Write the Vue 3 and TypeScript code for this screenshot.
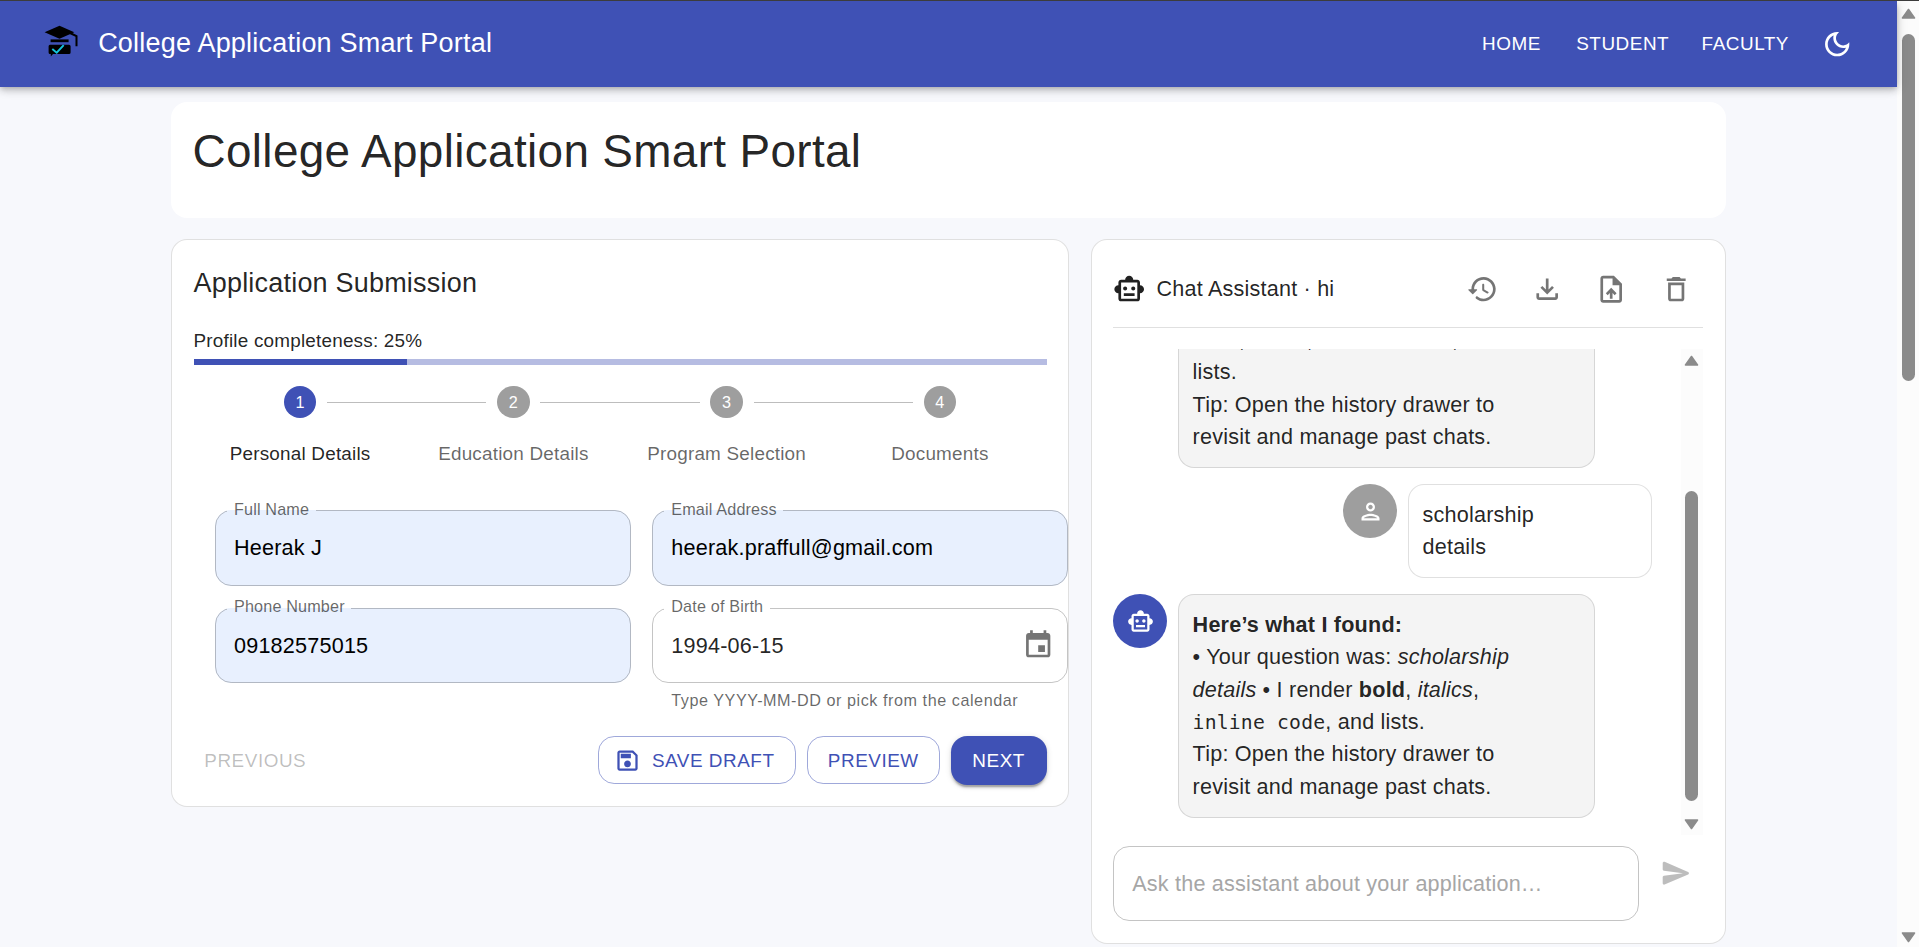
<script setup lang="ts">
import { ref } from 'vue'

interface Field {
  id: string
  label: string
  type: string
  autofilled: boolean
  helper?: string
}

const steps: string[] = ['Personal Details', 'Education Details', 'Program Selection', 'Documents']
const activeStep = ref<number>(0)
const completeness = ref<number>(25)

const fields: Field[] = [
  { id: 'name', label: 'Full Name', type: 'text', autofilled: true },
  { id: 'email', label: 'Email Address', type: 'text', autofilled: true },
  { id: 'phone', label: 'Phone Number', type: 'text', autofilled: true },
  { id: 'dob', label: 'Date of Birth', type: 'text', autofilled: false, helper: 'Type YYYY-MM-DD or pick from the calendar' },
]

const values = ref<Record<string, string>>({
  name: 'Heerak J',
  email: 'heerak.praffull@gmail.com',
  phone: '09182575015',
  dob: '1994-06-15',
})

const draft = ref<string>('')
const nav: string[] = ['Home', 'Student', 'Faculty']

const robot =
  'M20 9V7c0-1.1-.9-2-2-2h-3c0-1.66-1.34-3-3-3S9 3.34 9 5H6c-1.1 0-2 .9-2 2v2c-1.66 0-3 1.34-3 3s1.34 3 3 3v4c0 1.1.9 2 2 2h12c1.1 0 2-.9 2-2v-4c1.66 0 3-1.34 3-3s-1.34-3-3-3zm-2 10H6V7h12v12zm-9-6c-.83 0-1.5-.67-1.5-1.5S8.17 10 9 10s1.5.67 1.5 1.5S9.83 13 9 13zm7.5-1.5c0 .83-.67 1.5-1.5 1.5s-1.5-.67-1.5-1.5.67-1.5 1.5-1.5 1.5.67 1.5 1.5zM8 15h8v2H8v-2z'

const tools: { name: string; path: string }[] = [
  {
    name: 'History',
    path: 'M13.26 3C8.17 2.86 4 6.95 4 12H2.21c-.45 0-.67.54-.35.85l2.79 2.8c.2.2.51.2.71 0l2.79-2.8c.31-.31.09-.85-.36-.85H6c0-3.9 3.18-7.05 7.1-7 3.72.05 6.85 3.18 6.9 6.9.05 3.91-3.1 7.1-7 7.1-1.61 0-3.1-.55-4.28-1.48-.4-.31-.96-.28-1.32.08-.42.42-.39 1.13.08 1.49C9 20.29 10.91 21 13 21c5.05 0 9.14-4.17 9-9.26-.13-4.69-4.05-8.61-8.74-8.74zm-.51 5c-.41 0-.75.34-.75.75v3.68c0 .35.19.68.49.86l3.12 1.85c.36.21.82.09 1.03-.26.21-.36.09-.82-.26-1.03l-2.88-1.71v-3.4c0-.4-.34-.74-.75-.74z',
  },
  {
    name: 'Download',
    path: 'M18 15v3H6v-3H4v3c0 1.1.9 2 2 2h12c1.1 0 2-.9 2-2v-3h-2zm-1-4-1.41-1.41L13 12.17V4h-2v8.17L8.41 9.59 7 11l5 5 5-5z',
  },
  {
    name: 'Upload',
    path: 'M14 2H6c-1.1 0-1.99.9-1.99 2L4 20c0 1.1.89 2 1.99 2H18c1.1 0 2-.9 2-2V8l-6-6zm4 18H6V4h7v5h5v11zM8 15.01l1.41 1.41L11 14.84V19h2v-4.16l1.59 1.59L16 15.01 12.01 11 8 15.01z',
  },
  {
    name: 'Clear',
    path: 'M6 19c0 1.1.9 2 2 2h8c1.1 0 2-.9 2-2V7H6v12zM8 9h8v10H8V9zm7.5-5-1-1h-5l-1 1H5v2h14V4h-3.5z',
  },
]
</script>

<template>
  <div class="window">
    <div class="page">
      <header class="appbar">
        <svg class="logo" viewBox="0 0 54 54">
          <path d="M12.600 15.300 27.500 8.800 42.300 15.300 27.500 21.800z" fill="#000" />
          <path d="M38 16l6.500 3.200v10" fill="none" stroke="#000" stroke-width="2" />
          <path d="M18.600 22.400h18v2.800h-18z" fill="#000" />
          <path d="M18 27.700h19q1.600 0 1.600 1.600v6.200q0 1.600-1.600 1.600H21l-2.200 2.400v-2.400H18q-1.400 0-1.400-1.600v-6.200q0-1.600 1.400-1.600z" fill="#000" />
          <path d="M20.300 32l4.400 3.700 7-7.600" fill="none" stroke="#14c4dc" stroke-width="1.900" />
        </svg>
        <div class="brand">College Application Smart Portal</div>
        <nav class="nav">
          <button v-for="n in nav" :key="n" class="nav-btn">{{ n }}</button>
          <button class="icon-btn light" aria-label="Theme">
            <svg viewBox="0 0 24 24"><path d="M9.37 5.51c-.18.64-.27 1.31-.27 1.99 0 4.08 3.32 7.4 7.4 7.4.68 0 1.35-.09 1.99-.27C17.45 17.19 14.93 19 12 19c-3.86 0-7-3.14-7-7 0-2.93 1.81-5.45 4.37-6.49zM12 3c-4.97 0-9 4.03-9 9s4.03 9 9 9 9-4.03 9-9c0-.46-.04-.92-.1-1.36-.98 1.37-2.58 2.26-4.4 2.26-2.98 0-5.4-2.42-5.4-5.4 0-1.81.89-3.42 2.26-4.4-.44-.06-.9-.1-1.36-.1z" /></svg>
          </button>
        </nav>
      </header>

      <main class="container">
        <section class="hero"><h1>College Application Smart Portal</h1></section>

        <div class="columns">
          <section class="card form-card">
            <h2>Application Submission</h2>
            <div class="body2">Profile completeness: {{ completeness }}%</div>
            <div class="progress"><div class="progress-fill" :style="{ width: completeness + '%' }"></div></div>

            <div class="stepper">
              <div v-for="(s, i) in steps" :key="s" class="step" :class="{ active: i === activeStep }">
                <div v-if="i > 0" class="connector"></div>
                <div class="dot">{{ i + 1 }}</div>
                <div class="step-label">{{ s }}</div>
              </div>
            </div>

            <div class="fields">
              <div v-for="f in fields" :key="f.id" class="field">
                <div class="input-box" :class="{ filled: f.autofilled }">
                  <input v-model="values[f.id]" :type="f.type" :aria-label="f.label" spellcheck="false" />
                  <fieldset><legend><span>{{ f.label }}</span></legend></fieldset>
                  <label>{{ f.label }}</label>
                  <svg v-if="f.id === 'dob'" class="calendar" viewBox="0 0 24 24"><path d="M17 12h-5v5h5v-5zM16 1v2H8V1H6v2H5c-1.11 0-1.990.9-1.990 2L3 19c0 1.100.890 2 2 2h14c1.100 0 2-.9 2-2V5c0-1.100-.9-2-2-2h-1V1h-2zm3 18H5V8h14v11z" /></svg>
                </div>
                <p v-if="f.helper" class="helper">{{ f.helper }}</p>
              </div>
            </div>

            <div class="actions">
              <button class="btn text">Previous</button>
              <div class="right">
                <button class="btn outlined">
                  <svg viewBox="0 0 24 24"><path d="M17 3H5c-1.110 0-2 .9-2 2v14c0 1.100.890 2 2 2h14c1.100 0 2-.9 2-2V7l-4-4zm2 16H5V5h11.170L19 7.830V19zm-7-7c-1.660 0-3 1.340-3 3s1.340 3 3 3 3-1.340 3-3-1.340-3-3-3zM6 6h9v4H6z" /></svg>
                  Save Draft
                </button>
                <button class="btn outlined">Preview</button>
                <button class="btn contained">Next</button>
              </div>
            </div>
          </section>

          <section class="card chat-card">
            <div class="chat-head">
              <svg class="robot" viewBox="0 0 24 24"><path :d="robot" /></svg>
              <div class="chat-title">Chat Assistant · hi</div>
              <button v-for="t in tools" :key="t.name" class="icon-btn" :aria-label="t.name">
                <svg viewBox="0 0 24 24"><path :d="t.path" /></svg>
              </button>
            </div>
            <div class="divider"></div>

            <div class="log">
              <div class="messages">
                <div class="msg scrolled">
                  <div class="bubble bot-bubble">
                    <strong>bold</strong>, <em>italics</em>, <code>inline code</code>, and<br />lists.<br />
                    Tip: Open the history drawer to<br />revisit and manage past chats.
                  </div>
                </div>
                <div class="msg mine">
                  <div class="avatar"><svg viewBox="0 0 24 24"><path d="M12 6c1.100 0 2 .9 2 2s-.9 2-2 2-2-.9-2-2 .9-2 2-2m0 10c2.700 0 5.800 1.290 6 2H6c.230-.720 3.310-2 6-2m0-12C9.790 4 8 5.790 8 8s1.790 4 4 4 4-1.790 4-4-1.790-4-4-4zm0 10c-2.670 0-8 1.340-8 4v2h16v-2c0-2.660-5.330-4-8-4z" /></svg></div>
                  <div class="bubble my-bubble">scholarship<br />details</div>
                </div>
                <div class="msg">
                  <div class="avatar bot"><svg viewBox="0 0 24 24"><path :d="robot" /></svg></div>
                  <div class="bubble bot-bubble">
                    <strong>Here’s what I found:</strong><br />
                    • Your question was: <em>scholarship<br />details</em> • I render <strong>bold</strong>, <em>italics</em>,<br />
                    <code>inline code</code>, and lists.<br />
                    Tip: Open the history drawer to<br />revisit and manage past chats.
                  </div>
                </div>
              </div>
              <div class="scroll inner">
                <svg class="arrow" viewBox="0 0 15 11"><path d="M7.500 1.500 13.500 10H1.500z" /></svg>
                <div class="inner-thumb"></div>
                <svg class="arrow" viewBox="0 0 15 11"><path d="M7.500 9.500 1.500 1H13.500z" /></svg>
              </div>
            </div>

            <div class="composer">
              <div class="ask"><input v-model="draft" type="text" placeholder="Ask the assistant about your application…" /></div>
              <button class="icon-btn disabled" aria-label="Send">
                <svg viewBox="0 0 24 24"><path d="M3.400 20.400l17.450-7.480c.810-.350.810-1.490 0-1.840L3.400 3.600c-.660-.290-1.390.2-1.390.910L2 9.120c0 .5.370.930.870.990L17 12 2.870 13.880c-.5.080-.870.510-.870 1.010l.010 4.610c0 .710.730 1.200 1.390.9z" /></svg>
              </button>
            </div>
          </section>
        </div>
      </main>
    </div>

    <div class="scroll outer">
      <svg class="arrow" viewBox="0 0 15 11"><path d="M7.500 1.500 13.500 10H1.500z" /></svg>
      <div class="outer-thumb"></div>
      <svg class="arrow last" viewBox="0 0 15 11"><path d="M7.500 9.500 1.500 1H13.500z" /></svg>
    </div>
  </div>
</template>

<style>
html,
body {
  margin: 0;
  overflow: hidden;
  background: #f7f8fc;
}
</style>

<style scoped>
* {
  box-sizing: border-box;
}
.window {
  width: 1919px;
  height: 947px;
  display: flex;
  overflow: hidden;
  border-top: 1px solid #3c3c3c;
  background: #f7f8fc;
  font-family: 'Liberation Sans', Arial, sans-serif;
  color: rgba(0, 0, 0, 0.87);
}
/* The whole interface is laid out in CSS pixels at 135% browser zoom. */
.page {
  zoom: 1.35;
  flex: 1;
  min-width: 0;
}
button,
input {
  font-family: inherit;
  border: 0;
  background: none;
  margin: 0;
  padding: 0;
}
svg {
  fill: currentColor;
  display: block;
}
.appbar {
  height: 64px;
  background: #3f51b5;
  color: #fff;
  display: flex;
  align-items: center;
  padding: 0 24px;
  position: relative;
  box-shadow: 0 2px 4px -1px rgba(0, 0, 0, 0.2), 0 4px 5px 0 rgba(0, 0, 0, 0.14), 0 1px 10px 0 rgba(0, 0, 0, 0.12);
}
.logo {
  width: 40px;
  height: 40px;
  margin-right: 8.7px;
}
.brand {
  font-size: 20px;
  line-height: 32px;
  flex: 1;
  letter-spacing: 0.0079em;
  padding-bottom: 1.5px;
}
.nav {
  display: flex;
  align-items: center;
  gap: 8px;
}
.nav-btn {
  color: #fff;
  font-size: 14px;
  line-height: 24.5px;
  padding: 5.2px 8px 6.8px;
  letter-spacing: 0.02857em;
  text-transform: uppercase;
}
.nav-btn:first-child {
  margin-right: 2.2px;
}
.icon-btn {
  width: 40px;
  height: 40px;
  padding: 8px;
  color: rgba(0, 0, 0, 0.54);
  flex: none;
}
.icon-btn.light {
  color: #fff;
}
.icon-btn.disabled {
  color: rgba(0, 0, 0, 0.26);
}
.icon-btn svg {
  width: 24px;
  height: 24px;
}
.container {
  width: 1152px;
  margin: 0 auto;
  padding-top: 10.8px;
}
.hero {
  background: #fff;
  border-radius: 12px;
  padding: 15.7px 16px;
  height: 86px;
}
h1 {
  margin: 0;
  font-size: 34px;
  line-height: 42px;
  font-weight: 400;
  letter-spacing: 0.00735em;
}
.columns {
  margin-top: 15.3px;
  display: grid;
  grid-template-columns: 665.33px 470.67px;
  gap: 16px;
  align-items: start;
}
.card {
  background: #fff;
  border: 1px solid rgba(0, 0, 0, 0.12);
  border-radius: 12px;
  padding: 16px;
}
.form-card {
  padding-bottom: 15.4px;
}
h2 {
  margin: 0.6px 0 16px;
  font-size: 20px;
  line-height: 32px;
  font-weight: 400;
  letter-spacing: 0.0075em;
}
.body2 {
  font-size: 14px;
  line-height: 20px;
  letter-spacing: 0.01071em;
}
.progress {
  margin-top: 4px;
  height: 4.3px;
  background: #b6bce2;
}
.progress-fill {
  height: 100%;
  background: #3f51b5;
}
.stepper {
  display: flex;
  margin-top: 15.3px;
}
.step {
  flex: 1;
  position: relative;
  display: flex;
  flex-direction: column;
  align-items: center;
}
.dot {
  width: 24px;
  height: 24px;
  border-radius: 50%;
  background: #9e9e9e;
  color: #fff;
  font-size: 12px;
  line-height: 24px;
  text-align: center;
}
.active .dot {
  background: #3f51b5;
}
.connector {
  position: absolute;
  top: 12px;
  left: calc(-50% + 20px);
  right: calc(50% + 20px);
  border-top: 1px solid #bdbdbd;
}
.step-label {
  margin-top: 16px;
  font-size: 14px;
  line-height: 20px;
  letter-spacing: 0.01071em;
  color: rgba(0, 0, 0, 0.6);
}
.active .step-label {
  color: rgba(0, 0, 0, 0.87);
}
.fields {
  margin: 32.2px -16px 0 16px;
  display: grid;
  grid-template-columns: 1fr 1fr;
  gap: 16.4px 16px;
}
.input-box {
  position: relative;
  height: 56px;
  border-radius: 12px;
  padding: 0 14px;
}
.input-box input {
  width: 100%;
  height: 56px;
  font-size: 16px;
  letter-spacing: 0.00938em;
  color: rgba(0, 0, 0, 0.87);
  outline: none;
}
.filled {
  background: #e8f0fe;
}
.filled input {
  color: #000;
}
.input-box fieldset {
  position: absolute;
  inset: -5px 0 0;
  margin: 0;
  padding: 0 8px;
  border: 1px solid rgba(0, 0, 0, 0.23);
  border-radius: 12px;
  pointer-events: none;
  min-width: 0;
}
.input-box legend {
  height: 11px;
  padding: 0;
  font-size: 12px;
  line-height: 11px;
  letter-spacing: 0.00938em;
  visibility: hidden;
}
.input-box legend span {
  display: inline-block;
  padding: 0 5px;
}
.input-box label {
  position: absolute;
  left: 14px;
  top: -9.3px;
  font-size: 12px;
  line-height: 17px;
  letter-spacing: 0.00938em;
  color: rgba(0, 0, 0, 0.6);
}
.calendar {
  position: absolute;
  right: 10px;
  top: 15.5px;
  width: 24px;
  height: 24px;
  color: rgba(0, 0, 0, 0.54);
}
.helper {
  margin: 2.4px 14px 0;
  font-size: 12px;
  line-height: 20px;
  letter-spacing: 0.03333em;
  color: rgba(0, 0, 0, 0.6);
}
.actions {
  margin-top: 16.6px;
  display: flex;
  justify-content: space-between;
  align-items: flex-start;
}
.right {
  display: flex;
  align-items: flex-start;
  gap: 8px;
}
.btn {
  font-size: 14px;
  line-height: 24.5px;
  letter-spacing: 0.02857em;
  text-transform: uppercase;
  border-radius: 12px;
  display: flex;
  align-items: center;
}
.btn.text {
  padding: 6px 8px;
  color: rgba(0, 0, 0, 0.26);
}
.btn.outlined {
  padding: 5px 15px 4.4px;
  border: 1px solid rgba(63, 81, 181, 0.5);
  color: #3f51b5;
}
.btn.outlined svg {
  width: 20px;
  height: 20px;
  margin: 0 8px 0 -4px;
}
.btn.contained {
  padding: 6px 16px;
  background: #3f51b5;
  color: #fff;
  box-shadow: 0 3px 1px -2px rgba(0, 0, 0, 0.2), 0 2px 2px 0 rgba(0, 0, 0, 0.14), 0 1px 5px 0 rgba(0, 0, 0, 0.12);
}
.chat-head {
  display: flex;
  align-items: center;
  gap: 8px;
  margin-top: 0.6px;
}
.robot {
  width: 24px;
  height: 24px;
  flex: none;
}
.chat-title {
  flex: 1;
  font-size: 16px;
  line-height: 24px;
  letter-spacing: 0.00938em;
}
.divider {
  margin-top: 8px;
  border-top: 1px solid rgba(0, 0, 0, 0.12);
}
.log {
  margin-top: 15.3px;
  height: 360px;
  display: flex;
}
.messages {
  flex: 1;
  height: 360px;
  overflow: hidden;
  display: flex;
  flex-direction: column;
  justify-content: flex-end;
  gap: 12px;
  padding: 0 20.9px 12.5px 0;
}
.msg {
  display: flex;
  gap: 8px;
  align-items: flex-start;
  flex: none;
}
.scrolled {
  padding-left: 48px;
}
.mine {
  justify-content: flex-end;
}
.avatar {
  width: 40px;
  height: 40px;
  border-radius: 50%;
  background: #9e9e9e;
  color: #fff;
  display: flex;
  align-items: center;
  justify-content: center;
  flex: none;
}
.avatar.bot {
  background: #3f51b5;
}
.avatar svg {
  width: 20px;
  height: 20px;
}
.bubble {
  border: 1px solid rgba(0, 0, 0, 0.12);
  border-radius: 12px;
  padding: 10px;
  font-size: 16px;
  line-height: 24px;
  letter-spacing: 0.00938em;
  white-space: nowrap;
}
.bot-bubble {
  width: 308.5px;
  background: #f4f4f4;
}
.my-bubble {
  width: 181px;
  background: #fff;
}
code {
  font-family: 'DejaVu Sans Mono', monospace;
  font-size: 14.6px;
  line-height: 1;
}
.composer {
  margin-top: 8.3px;
  display: flex;
  gap: 8px;
  align-items: flex-start;
}
.ask {
  flex: 1;
  height: 56px;
  border: 1px solid rgba(0, 0, 0, 0.23);
  border-radius: 12px;
  padding: 0 13.3px;
}
.ask input {
  width: 100%;
  height: 100%;
  font-size: 16px;
  letter-spacing: 0.00938em;
  outline: none;
}
.ask input::placeholder {
  color: #a6a6a6;
}
.scroll {
  background: #fcfcfc;
  flex: none;
  display: flex;
  flex-direction: column;
  align-items: center;
}
.arrow path {
  fill: #8b8b8b;
  stroke: #8b8b8b;
  stroke-width: 1.6;
  stroke-linejoin: round;
}
.inner {
  width: 17px;
  padding: 4.7px 1px 3.7px 0;
}
.inner .arrow {
  width: 11.1px;
  height: 8.15px;
  flex: none;
}
.inner-thumb {
  width: 9.6px;
  height: 230px;
  border-radius: 5px;
  background: #8b8b8b;
  margin: auto 0 13px;
}
.outer {
  width: 22px;
  padding: 6.5px 0 4px 1px;
}
.outer .arrow {
  width: 15px;
  height: 11px;
  flex: none;
}
.outer-thumb {
  width: 13px;
  height: 347px;
  margin-top: 15.5px;
  border-radius: 7px;
  background: #8b8b8b;
}
.last {
  margin-top: auto;
}
</style>
